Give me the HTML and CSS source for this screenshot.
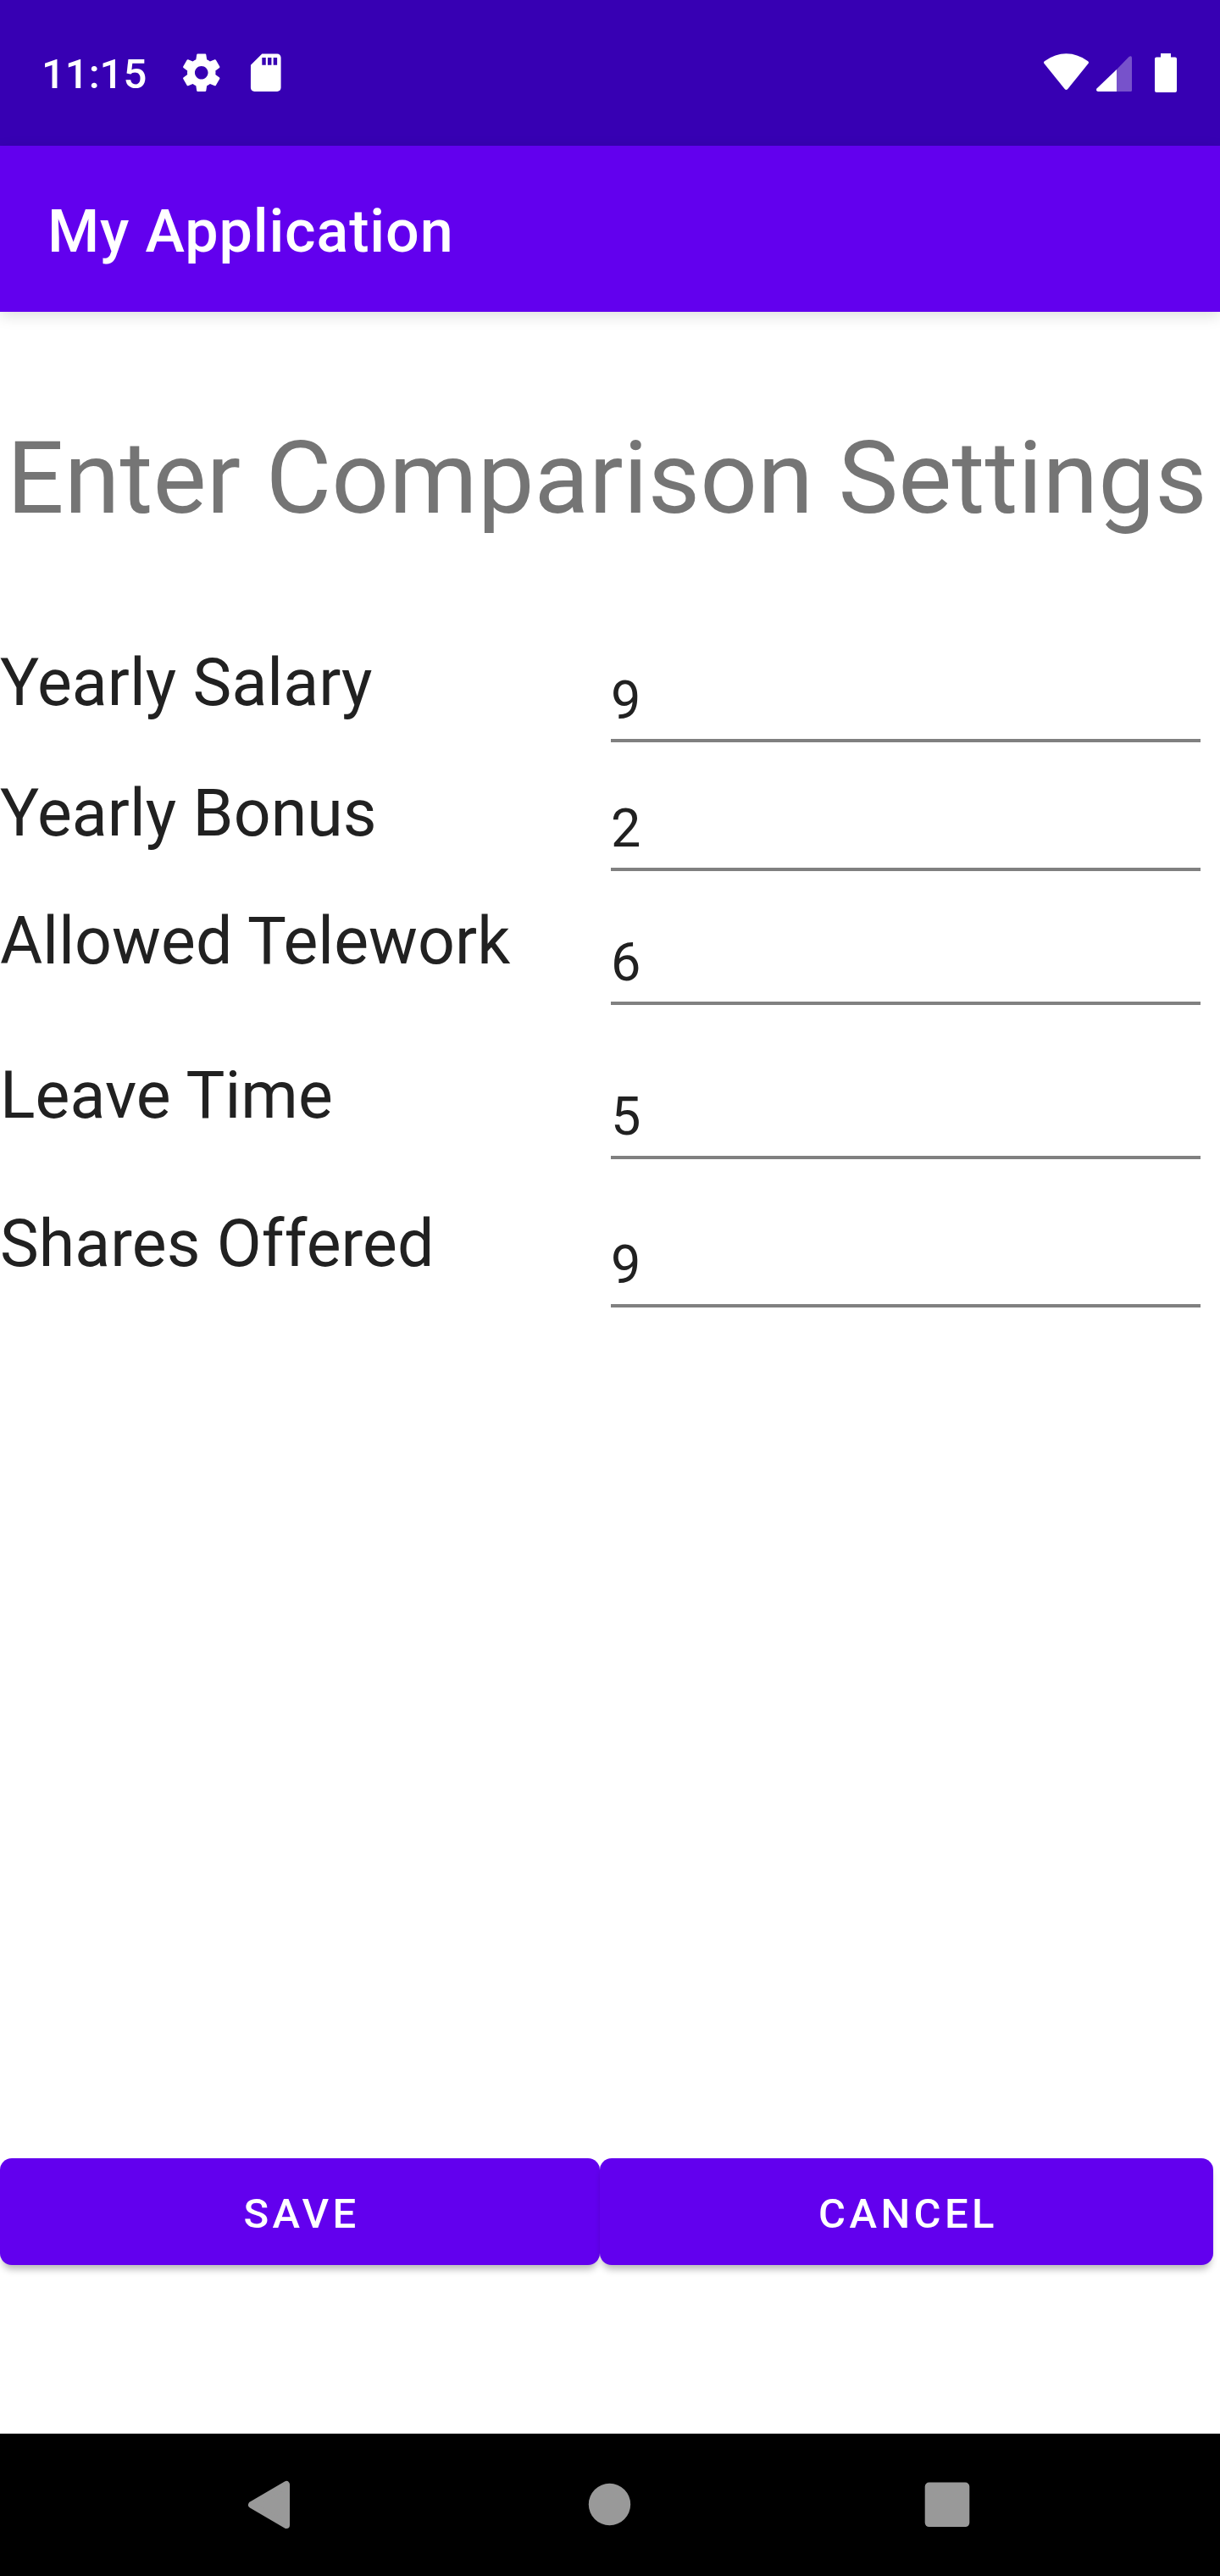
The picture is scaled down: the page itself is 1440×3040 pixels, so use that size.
FILE: index.html
```html
<!DOCTYPE html>
<html lang="en">
<head>
<meta charset="utf-8">
<title>My Application</title>
<link rel="stylesheet" href="styles.css">
</head>
<body>
<div class="screen">
  <header class="status">
    <span class="clock">11:15</span>
    <svg class="gear" viewBox="0 0 24 24"><path d="M19.43 12.98c.04-.32.07-.64.07-.98s-.03-.66-.07-.98l2.110-1.650c.19-.15.24-.42.12-.64l-2-3.460c-.12-.22-.39-.3-.61-.22l-2.490 1c-.52-.4-1.080-.73-1.690-.98l-.38-2.650C14.460 2.180 14.250 2 14 2h-4c-.25 0-.46.18-.49.42l-.38 2.650c-.61.25-1.170.59-1.690.98l-2.490-1c-.23-.09-.49 0-.61.22l-2 3.460c-.13.22-.07.49.12.64l2.110 1.650c-.04.32-.07.65-.07.98s.03.66.07.98l-2.110 1.650c-.19.15-.24.42-.12.64l2 3.460c.12.22.39.3.61.22l2.490-1c.52.4 1.080.73 1.690.98l.38 2.650c.03.24.24.42.49.42h4c.25 0 .46-.18.49-.42l.38-2.650c.61-.25 1.170-.59 1.690-.98l2.490 1c.23.09.49 0 .61-.22l2-3.460c.12-.22.07-.49-.12-.64l-2.110-1.650zM12 15.500c-1.930 0-3.500-1.570-3.500-3.500s1.570-3.500 3.500-3.500 3.500 1.570 3.500 3.500-1.570 3.500-3.500 3.500z"/></svg>
    <svg class="card" viewBox="0 0 24 24"><path d="M18 2h-8L4.020 8 4 20c0 1.100.9 2 2 2h12c1.100 0 2-.9 2-2V4c0-1.100-.9-2-2-2zm-6 6h-2V4h2zm3 0h-2V4h2zm3 0h-2V4h2z"/></svg>
    <svg class="signals" viewBox="0 0 160 50">
      <path d="M.8 11.200Q26.500-6.500 52.200 11.200Q53.600 12.500 52.500 14L28.300 44Q26.500 46 24.700 44L.5 14Q-.6 12.500.8 11.200Z"/>
      <path opacity=".32" d="M86 21L100.500 6Q104 4 104 7.500V45.500Q104 47 102.500 47H86Z"/>
      <path d="M86 21V47H64Q61 46 62.500 43.500Z"/>
      <path d="M138 2h12v4.500h5q2 0 2 2V46q0 2-2 2H133q-2 0-2-2V8.500q0-2 2-2h5z"/>
    </svg>
  </header>
  <div class="appbar">My Application</div>
  <main class="content">
    <h1>Enter Comparison Settings</h1>
    <form class="fields">
      <div class="row salary"><label>Yearly Salary</label><span class="input">9</span></div>
      <div class="row bonus"><label>Yearly Bonus</label><span class="input">2</span></div>
      <div class="row telework"><label>Allowed Telework</label><span class="input">6</span></div>
      <div class="row leave"><label>Leave Time</label><span class="input">5</span></div>
      <div class="row shares"><label>Shares Offered</label><span class="input">9</span></div>
    </form>
    <div class="actions"><button class="save">SAVE</button><button class="cancel">CANCEL</button></div>
  </main>
  <nav class="navbar">
    <svg viewBox="0 0 1440 168"><path d="M297 84L338 60V108Z" stroke="#999" stroke-width="8" stroke-linejoin="round"/><circle cx="719.500" cy="83.500" r="24.700"/><rect x="1091.700" y="57.500" width="52.600" height="52.600" rx="5"/></svg>
  </nav>
</div>
</body>
</html>
```
FILE: styles.css
```css
* { box-sizing: border-box; }
body { margin: 0; font-family: Roboto, sans-serif; background: #fff; }
.screen { width: 1440px; height: 3040px; display: flex; flex-direction: column; }
.status { height: 172px; background: #3700b3; color: #fff; display: flex; align-items: center; padding: 0 48px 0 49px; fill: #fff; }
.clock { font-size: 49px; font-weight: 500; width: 161.600px; padding-top: 3px; white-space: nowrap; }
.gear { width: 53.500px; height: 53.500px; }
.card { width: 53.500px; height: 53.500px; margin-left: 23.400px; }
.signals { width: 160px; height: 50px; margin-left: auto; }
.appbar { height: 196px; background: #6200ee; color: #fff; font-size: 70px; font-weight: 500; line-height: 202px; letter-spacing: .88px; padding-left: 56px; box-shadow: 0 5px 16px rgba(0,0,0,.13); }
.content { flex: 1; display: flex; flex-direction: column; }
h1 { margin: 127px 0 0 8px; font-size: 119px; line-height: 140px; font-weight: 400; letter-spacing: .08px; color: #757575; white-space: nowrap; }
.fields { margin-top: 125px; color: #212121; }
.row { display: flex; align-items: flex-end; }
label { width: 721px; font-size: 77px; line-height: 90px; letter-spacing: .1px; white-space: nowrap; }
.input { width: 696px; height: 101px; border-bottom: 4px solid #808080; font-size: 63px; line-height: 102px; }
/* row heights follow the underline positions; label padding lifts each caption above its line */
.salary { height: 116px; }
.salary label { padding-bottom: 25px; }
.salary .input { line-height: 104px; }
.bonus { height: 152px; }
.bonus label { padding-bottom: 23px; }
.telework { height: 158px; }
.telework label { padding-bottom: 30px; }
.leave { height: 182px; }
.leave label { padding-bottom: 30px; }
.shares { height: 175px; }
.shares label { padding-bottom: 30px; }
.actions { margin-top: auto; margin-bottom: 199px; display: flex; }
button { height: 126px; border: 0; border-radius: 14px; padding: 4px 0 0 4px; background: #6200ee; color: #fff; font: 500 49px Roboto, sans-serif; letter-spacing: 4.400px; box-shadow: 0 8px 9px -3px rgba(0,0,0,.28); }
.save { width: 708px; }
.cancel { width: 724px; }
.navbar { height: 168px; background: #000; fill: #999; }
.navbar svg { display: block; width: 1440px; height: 168px; }
```
